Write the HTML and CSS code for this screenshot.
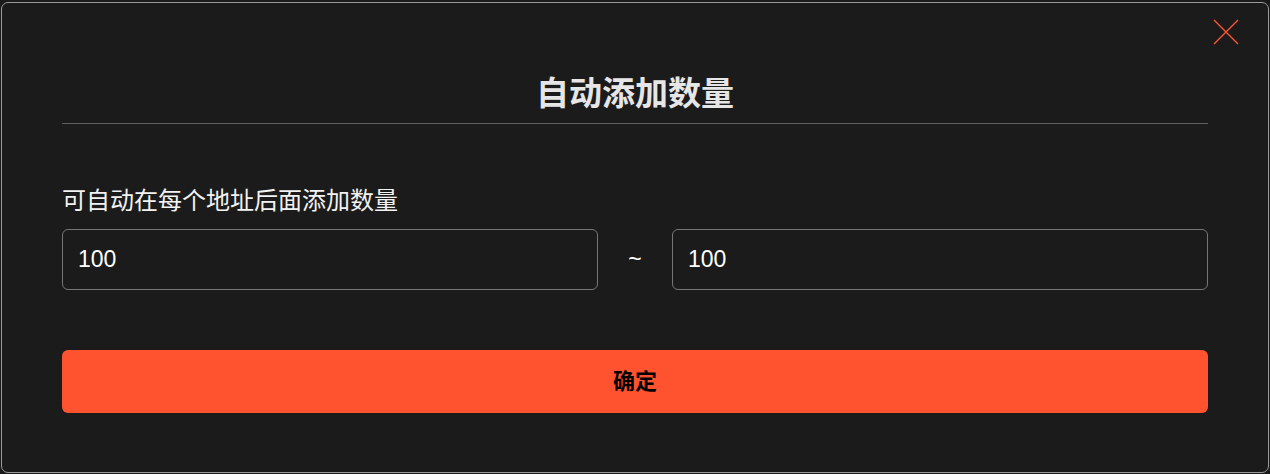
FILE: index.html
```html
<!DOCTYPE html>
<html lang="zh-CN">
<head>
<meta charset="utf-8">
<title>自动添加数量</title>
<link rel="stylesheet" href="styles.css">
</head>
<body>
<div class="dialog">
  <button class="close" aria-label="关闭">
    <svg width="26" height="26" viewBox="0 0 26 26"><path d="M1 1 L25 25 M25 1 L1 25" stroke="#ff5430" stroke-width="1.4" fill="none"/></svg>
  </button>
  <div class="header">
    <h1 class="title">自动添加数量</h1>
  </div>
  <div class="body">
    <div class="label">可自动在每个地址后面添加数量</div>
    <div class="range">
      <div class="field">100</div>
      <div class="tilde">~</div>
      <div class="field">100</div>
    </div>
    <button class="confirm">确定</button>
  </div>
</div>
</body>
</html>
```
FILE: styles.css
```css
html, body {
  margin: 0;
  padding: 0;
  background: #1b1b1b;
}
body {
  padding: 2px 1px 1px 1px;
  height: 474px;
  box-sizing: border-box;
  font-family: "Liberation Sans", "Noto Sans CJK SC", sans-serif;
}
.dialog {
  position: relative;
  box-sizing: border-box;
  height: 471px;
  border: 1px solid #9a9a9a;
  border-radius: 7px;
  background: #1b1b1b;
  padding: 0 60px;
}
.close {
  position: absolute;
  top: 16px;
  right: 29px;
  width: 26px;
  height: 26px;
  padding: 0;
  border: 0;
  background: transparent;
  cursor: pointer;
}
.close svg { display: block; }
.header {
  border-bottom: 1px solid #5e5e5e;
  height: 121px;
  display: flex;
  align-items: flex-end;
  justify-content: center;
  box-sizing: border-box;
}
.title {
  margin: 0 0 12px;
  font-size: 33px;
  line-height: 40px;
  font-weight: 700;
  color: #e6e6e6;
  font-family: "Noto Sans CJK SC", sans-serif;
}
.body {
  padding-top: 59px;
}
.label {
  font-family: "Noto Sans CJK SC", sans-serif;
  font-size: 24px;
  line-height: 32px;
  color: #f2f2f2;
}
.range {
  display: flex;
  align-items: center;
  margin-top: 14px;
}
.field {
  flex: 1;
  height: 61px;
  box-sizing: border-box;
  border: 1px solid #767676;
  border-radius: 6px;
  padding: 0 15px;
  display: flex;
  align-items: center;
  font-size: 23px;
  color: #ffffff;
}
.tilde {
  width: 74px;
  text-align: center;
  color: #ffffff;
  font-size: 23px;
}
.confirm {
  display: block;
  width: 100%;
  margin-top: 60px;
  height: 63px;
  padding: 0 0 5px;
  border: 0;
  border-radius: 6px;
  background: #ff5330;
  color: #000000;
  font-family: "Noto Sans CJK SC", sans-serif;
  font-size: 22px;
  font-weight: 700;
  cursor: pointer;
}
```
